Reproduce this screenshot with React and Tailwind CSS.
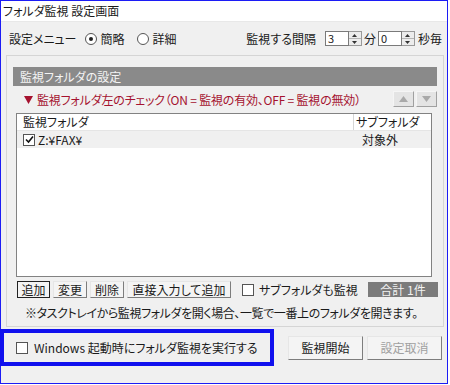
import React from 'react';

const Radio = ({ checked }) => (
  <span className="w-[12px] h-[12px] rounded-full border border-[#555] bg-white flex items-center justify-center">
    {checked && <span className="w-[4px] h-[4px] rounded-full bg-[#222]" />}
  </span>
);

const Check = ({ checked }) => (
  <span className="w-[12px] h-[12px] border border-[#555] bg-white flex items-center justify-center">
    {checked && (
      <svg width="9" height="9" viewBox="0 0 9 9">
        <path d="M1 4.5 L3.5 7 L8 1.5" fill="none" stroke="#111" strokeWidth="1.6" />
      </svg>
    )}
  </span>
);

const Spinner = ({ value }) => (
  <div className="flex h-[15px]">
    <div className="w-[24px] h-full border border-[#7a7a7a] bg-white pl-[2px] text-[11px] leading-[13px]">{value}</div>
    <div className="w-[13px] h-full flex flex-col border border-l-0 border-[#9a9a9a] bg-[#ececec]">
      <div className="flex-1 flex items-center justify-center border-b border-[#b5b5b5]">
        <svg width="5" height="3" viewBox="0 0 5 3"><path d="M0 3 L2.5 0 L5 3Z" fill="#333" /></svg>
      </div>
      <div className="flex-1 flex items-center justify-center">
        <svg width="5" height="3" viewBox="0 0 5 3"><path d="M0 0 L2.5 3 L5 0Z" fill="#333" /></svg>
      </div>
    </div>
  </div>
);

const Btn = ({ children, focused, className = '' }) => (
  <div
    className={`h-[17px] shrink-0 whitespace-nowrap flex items-center justify-center bg-[#f4f4f4] border ${
      focused ? 'border-[#222]' : 'border-t-[#e6e6e6] border-l-[#e6e6e6] border-r-[#7d7d7d] border-b-[#7d7d7d]'
    } ${className}`}
  >
    {children}
  </div>
);

export default function App() {
  return (
    <div className="w-[450px] h-[385px] bg-white font-['Noto_Sans_CJK_JP',sans-serif] [font-feature-settings:'palt'] text-[12px] leading-none text-[#1a1a1a]">
      <div className="w-[448px] h-[384px] border border-[#1c1cf5] flex flex-col bg-[#f0f0f0]">
        {/* title */}
        <div className="h-[21px] bg-white flex items-center pl-[2px] border-b border-[#e8e8e8]">
          フォルダ監視 設定画面
        </div>

        <div className="flex-1 flex flex-col pl-[5px]">
          {/* settings row */}
          <div className="h-[33px] flex items-center justify-between pr-[5px]">
            <div className="flex items-center pl-[3px]">
              <span>設定メニュー</span>
              <span className="ml-[8px]"><Radio checked /></span>
              <span className="ml-[4px]">簡略</span>
              <span className="ml-[12px]"><Radio /></span>
              <span className="ml-[4px]">詳細</span>
            </div>
            <div className="flex items-center">
              <span className="mr-[9px]">監視する間隔</span>
              <Spinner value="3" />
              <span className="mx-[2px]">分</span>
              <Spinner value="0" />
              <span className="ml-[3px]">秒毎</span>
            </div>
          </div>

          {/* group box */}
          <div className="w-[438px] h-[272px] border border-[#d5d5d5] flex flex-col">
            <div className="mt-[11px] mx-[6px] h-[19px] bg-[#8a8a8a] text-[#f4f4f4] flex items-center pl-[7px]">
              監視フォルダの設定
            </div>
            <div className="h-[27px] flex items-center justify-between pl-[17px] pr-[6px]">
              <span className="text-[#a5122f] flex items-center tracking-[-0.2px]">
                <svg width="9" height="8" viewBox="0 0 9 8" className="mr-[4px]"><path d="M0 0 L9 0 L4.5 8Z" fill="#a5122f" /></svg>
                監視フォルダ左のチェック（ON = 監視の有効、OFF = 監視の無効）
              </span>
              <div className="flex gap-[2px] -mt-[2px]">
                <div className="w-[21px] h-[16px] bg-[#e4e4e4] border border-t-[#f5f5f5] border-l-[#f5f5f5] border-r-[#a0a0a0] border-b-[#a0a0a0] flex items-center justify-center">
                  <svg width="9" height="6" viewBox="0 0 9 6"><path d="M0 6 L4.5 0 L9 6Z" fill="#a9a9a9" /></svg>
                </div>
                <div className="w-[21px] h-[16px] bg-[#e4e4e4] border border-t-[#f5f5f5] border-l-[#f5f5f5] border-r-[#a0a0a0] border-b-[#a0a0a0] flex items-center justify-center">
                  <svg width="9" height="6" viewBox="0 0 9 6"><path d="M0 0 L4.5 6 L9 0Z" fill="#a9a9a9" /></svg>
                </div>
              </div>
            </div>

            {/* list view */}
            <div className="ml-[9px] w-[416px] h-[164px] border border-[#828282] bg-white flex flex-col">
              <div className="h-[17px] flex border-b border-[#e5e5e5]">
                <div className="flex-1 flex items-center pl-[6px] border-r border-[#d5d5d5]">監視フォルダ</div>
                <div className="w-[77px] flex items-center pl-[2px]">サブフォルダ</div>
              </div>
              <div className="h-[17px] flex bg-[#f0f0f0]">
                <div className="flex-1 flex items-center pl-[6px]">
                  <Check checked />
                  <span className="ml-[3px]">Z:¥FAX¥</span>
                </div>
                <div className="w-[77px] flex items-center pl-[8px]">対象外</div>
              </div>
            </div>

            {/* buttons row */}
            <div className="mt-[4px] ml-[10px] flex items-center">
              <Btn focused className="w-[33px]">追加</Btn>
              <Btn className="w-[34px] ml-[3px]">変更</Btn>
              <Btn className="w-[34px] ml-[3px]">削除</Btn>
              <Btn className="w-[104px] ml-[3px]">直接入力して追加</Btn>
              <span className="ml-[11px]"><Check /></span>
              <span className="ml-[5px] whitespace-nowrap">サブフォルダも監視</span>
              <div className="ml-auto mr-[5px] w-[70px] h-[15px] bg-[#7b7b7b] text-[#f2f2f2] flex items-center justify-center whitespace-nowrap">
                合計 1件
              </div>
            </div>

            <div className="mt-[9px] pl-[18px] tracking-[-0.4px] whitespace-nowrap">
              ※タスクトレイから監視フォルダを開く場合、一覧で一番上のフォルダを開きます。
            </div>
          </div>

          {/* bottom row */}
          <div className="mt-[2px] flex items-center">
            <div className="-ml-[6px] w-[274px] h-[37px] border-4 border-[#1010ee] flex items-center pl-[12px]">
              <Check />
              <span className="ml-[6px] whitespace-nowrap">Windows 起動時にフォルダ監視を実行する</span>
            </div>
            <div className="ml-[14px] w-[75px] h-[24px] bg-[#f4f4f4] border border-t-[#e6e6e6] border-l-[#e6e6e6] border-r-[#7d7d7d] border-b-[#7d7d7d] flex items-center justify-center">
              監視開始
            </div>
            <div className="ml-[4px] w-[75px] h-[24px] bg-[#f4f4f4] border border-t-[#e6e6e6] border-l-[#e6e6e6] border-r-[#7d7d7d] border-b-[#7d7d7d] flex items-center justify-center text-[#a0a0a0]">
              設定取消
            </div>
          </div>
        </div>
      </div>
    </div>
  );
}
